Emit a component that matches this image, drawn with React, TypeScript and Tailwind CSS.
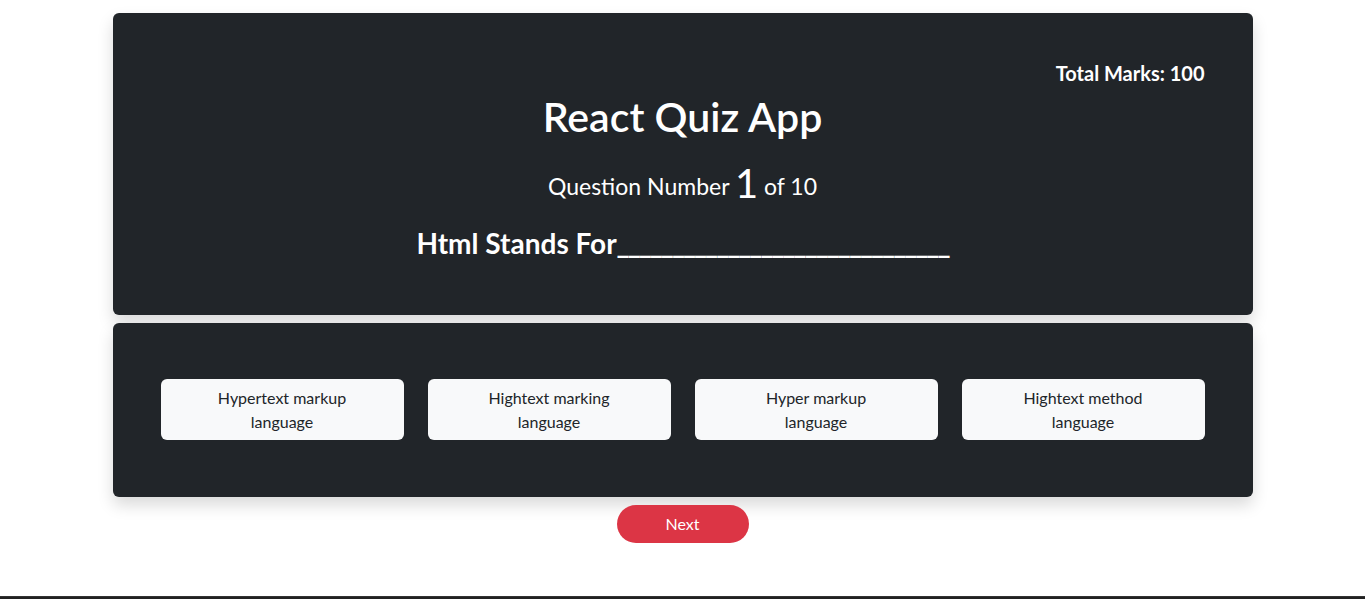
import { useState } from 'react';

const options = [
  'Hypertext markup language',
  'Hightext marking language',
  'Hyper markup language',
  'Hightext method language',
];

export default function App() {
  const [selected, setSelected] = useState<number | null>(null);

  return (
    <div
      className="min-h-[599px] bg-white flex flex-col"
      style={{ fontFamily: 'Lato, "Noto Sans", sans-serif' }}
    >
      <div className="w-[1140px] mx-auto pt-[13px] flex-1">
        <div className="bg-[#212529] rounded-md shadow-[0_8px_16px_rgba(0,0,0,0.15)] px-12 pt-12 pb-[54px] text-white">
          <div className="text-right text-[20px] leading-6 font-bold">Total Marks: 100</div>
          <h1 className="text-center text-[41px] leading-[48px] font-semibold mt-2">React Quiz App</h1>
          <div className="text-center text-[23px] leading-[48px] mt-[18px]">
            Question Number <span className="text-[40px] font-normal align-[-3px]">1</span> of 10
          </div>
          <h3 className="text-center text-[28px] leading-[36px] font-bold mt-[15px]">
            Html Stands For<span className="tracking-[-2px]">______________________________</span>
          </h3>
        </div>

        <div className="bg-[#212529] rounded-md shadow-[0_8px_16px_rgba(0,0,0,0.15)] mt-2 px-12 pt-14 pb-[57px]">
          <div className="grid grid-cols-4 gap-6">
            {options.map((opt, i) => (
              <button
                key={i}
                onClick={() => setSelected(i)}
                className={
                  'h-[61px] rounded-md text-[16px] leading-6 text-[#212529] ' +
                  (selected === i ? 'bg-[#dee2e6]' : 'bg-[#f8f9fa]')
                }
              >
                <span className="block w-[150px] mx-auto">{opt}</span>
              </button>
            ))}
          </div>
        </div>

        <div className="flex justify-center mt-2">
          <button className="w-[132px] h-[38px] rounded-full bg-[#dc3545] text-white text-[16px]">
            Next
          </button>
        </div>
      </div>
      <div className="h-[3px] bg-[#212121] border-t border-[#333]" />
    </div>
  );
}
